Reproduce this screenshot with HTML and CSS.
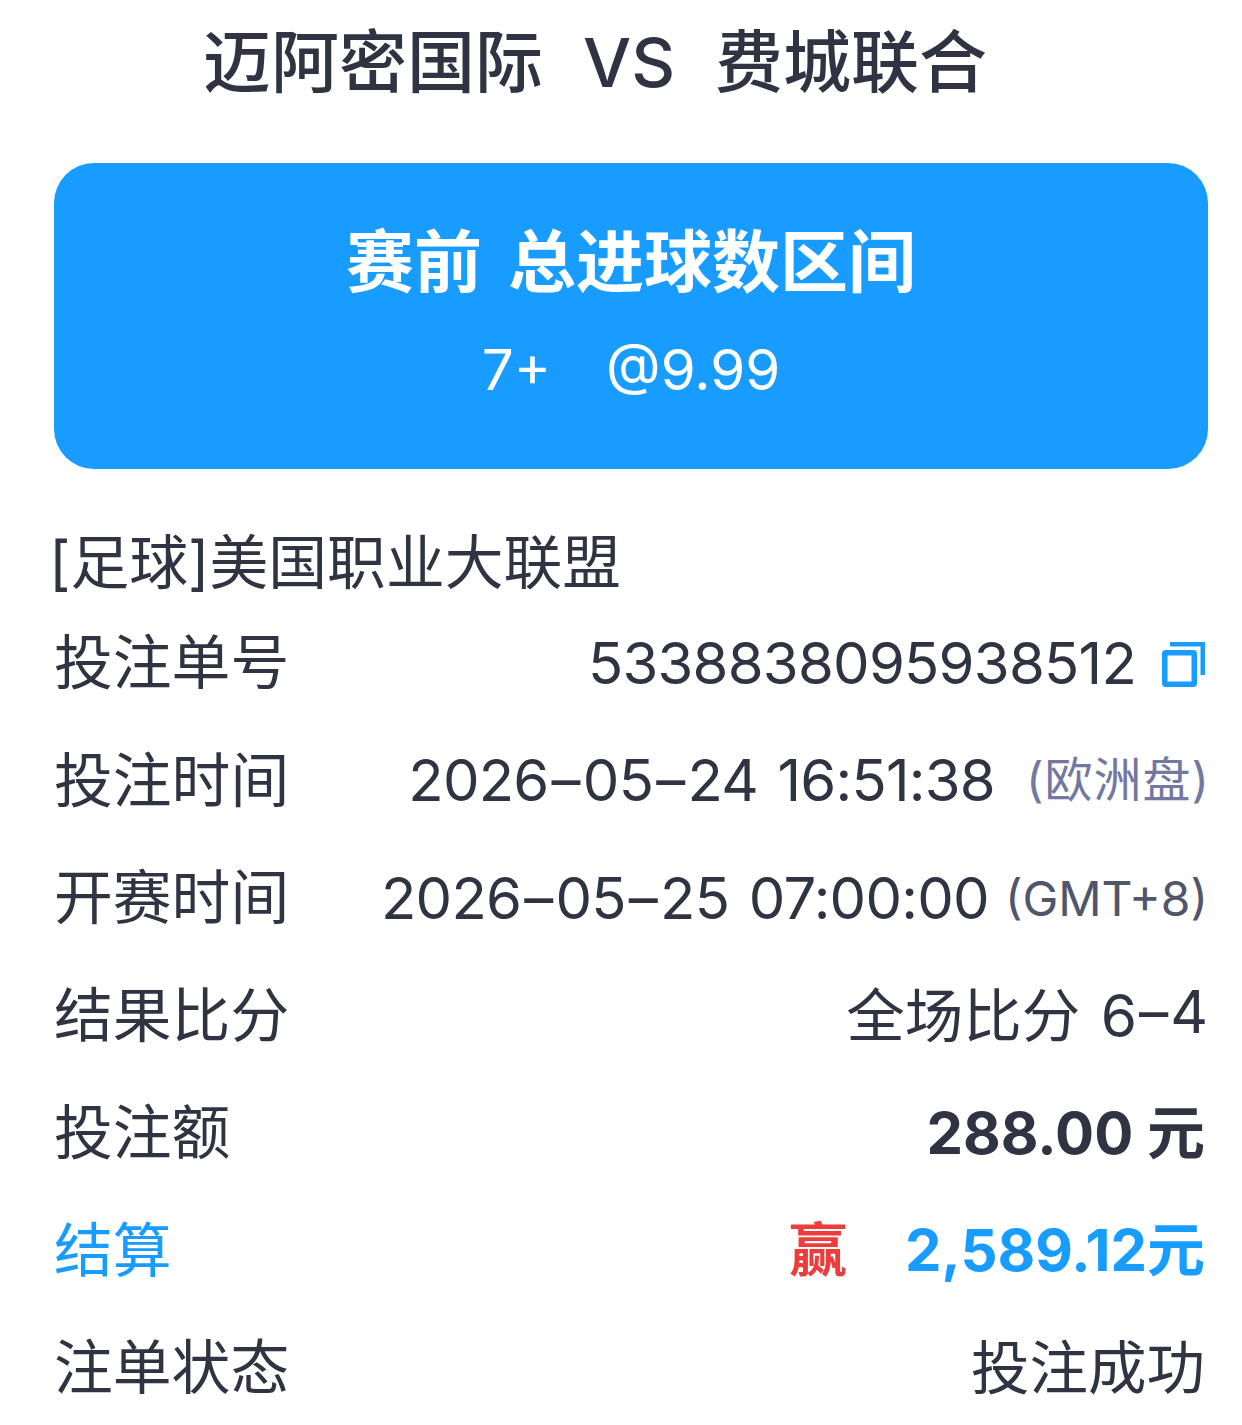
FILE: index.html
```html
<!DOCTYPE html>
<html lang="zh-CN">
<head>
    <meta charset="UTF-8">
    <meta name="viewport" content="width=device-width, initial-scale=1.0">
    <title>注单详情</title>
    <link rel="stylesheet" href="styles.css">
</head>
<body>
    <h1 class="match-title"><span>迈阿密国际</span><span>VS</span><span>费城联合</span></h1>
    <div class="bet-card">
        <div class="bet-name">赛前 总进球数区间</div>
        <div class="bet-odds"><span>7+</span><span>@9.99</span></div>
    </div>
    <div class="league">[足球]美国职业大联盟</div>
    <div class="rows">
        <div class="row">
            <span class="label">投注单号</span>
            <span class="value"><span class="num">5338838095938512</span>
                <svg class="copy-icon" width="43" height="45" viewBox="0 0 43 45" fill="none" stroke="#199cff">
                    <path d="M8 2.25H40.75V33" stroke-width="4.5"/>
                    <rect x="2.75" y="10.75" width="29.5" height="31.5" rx="1" stroke-width="5.5"/>
                </svg>
            </span>
        </div>
        <div class="row">
            <span class="label">投注时间</span>
            <span class="value"><span class="num date">2026<span class="dash">–</span>05<span class="dash">–</span>24 16:51:38</span><span class="note note-wide">(欧洲盘)</span></span>
        </div>
        <div class="row">
            <span class="label">开赛时间</span>
            <span class="value"><span class="num date">2026<span class="dash">–</span>05<span class="dash">–</span>25 07:00:00</span><span class="note note-latin">(GMT+8)</span></span>
        </div>
        <div class="row">
            <span class="label">结果比分</span>
            <span class="value date score">全场比分 6<span class="dash">–</span>4</span>
        </div>
        <div class="row">
            <span class="label">投注额</span>
            <span class="value bold inset">288.00 元</span>
        </div>
        <div class="row blue">
            <span class="label">结算</span>
            <span class="value bold inset"><span class="win">赢</span><span class="payout">2,589.12元</span></span>
        </div>
        <div class="row">
            <span class="label">注单状态</span>
            <span class="value inset">投注成功</span>
        </div>
    </div>
</body>
</html>
```

FILE: styles.css
```css
body {
    margin: 0;
    padding: 0 34px 0 54px;
    height: 1425px;
    box-sizing: border-box;
    overflow: hidden;
    background-color: #ffffff;
    color: #303442;
    font-family: "Inter", "Noto Sans CJK SC", sans-serif;
}
.match-title {
    display: flex;
    justify-content: center;
    gap: 40px;
    margin: 0 0 0 -72px;
    padding-top: 20px;
    height: 163px;
    box-sizing: border-box;
    font-size: 68px;
    line-height: 84px;
    font-weight: 500;
}
.bet-card {
    height: 306px;
    border-radius: 40px;
    background-color: #199cff;
    color: #ffffff;
    text-align: center;
    padding-top: 57px;
    box-sizing: border-box;
}
.bet-name {
    font-size: 68px;
    line-height: 84px;
    font-weight: 700;
    word-spacing: 10px;
}
.bet-odds {
    display: flex;
    justify-content: center;
    gap: 55px;
    margin-top: 33px;
    font-size: 56.5px;
    line-height: 66px;
}
.league {
    margin-top: 58px;
    margin-left: -5px;
    font-size: 58.8px;
    line-height: 72px;
}
.rows {
    margin-top: 1px;
}
.row {
    display: flex;
    justify-content: space-between;
    align-items: center;
    height: 117.5px;
}
.label {
    font-size: 58.8px;
}
.value {
    display: flex;
    align-items: center;
    font-size: 58.5px;
    white-space: pre;
}
.num {
    padding-top: 8px;
    font-size: 58px;
    letter-spacing: -0.75px;
}
.date {
    word-spacing: 4px;
}
.dash {
    padding: 0 3px;
}
.score .dash {
    padding: 0 2px;
}
.copy-icon {
    margin-top: 12px;
    margin-left: 26px;
    margin-right: 3px;
}
.note {
    font-size: 48px;
}
.note-wide {
    margin-left: 31px;
    margin-right: -2px;
    letter-spacing: 1px;
    color: #7478a0;
}
.note-latin {
    margin-left: 16px;
    padding-top: 10px;
    color: #50556a;
}
.bold {
    font-size: 58px;
    font-weight: 700;
}
.inset {
    margin-right: 3px;
}
.blue .label {
    color: #199cff;
}
.win {
    color: #ee3b3b;
}
.payout {
    margin-left: 58px;
    color: #199cff;
}
```
